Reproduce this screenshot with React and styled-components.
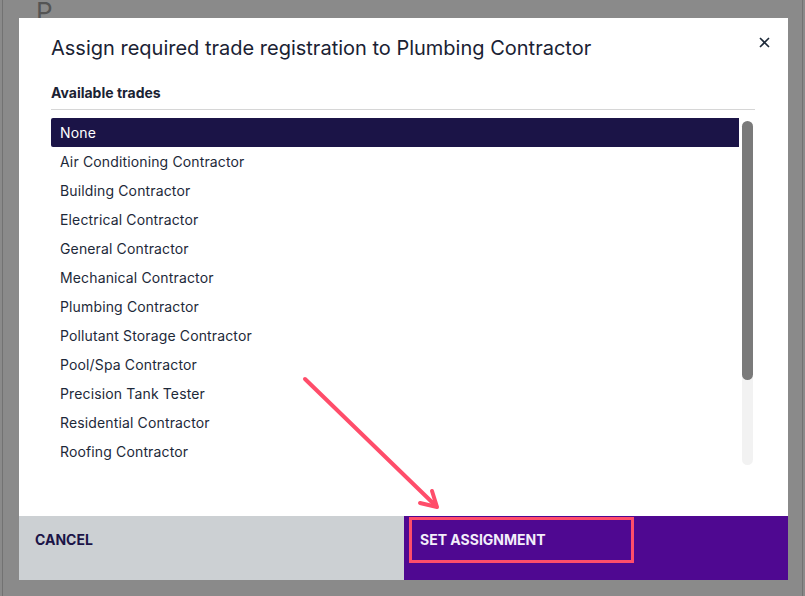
import React from "react"
import styled, { createGlobalStyle } from "styled-components"

const GlobalStyle = createGlobalStyle`
  html, body {
    margin: 0;
    padding: 0;
    background: #8a8a8a;
    font-family: Inter, "Liberation Sans", sans-serif;
    -webkit-font-smoothing: antialiased;
  }
`

const trades = [
  "None",
  "Air Conditioning Contractor",
  "Building Contractor",
  "Electrical Contractor",
  "General Contractor",
  "Mechanical Contractor",
  "Plumbing Contractor",
  "Pollutant Storage Contractor",
  "Pool/Spa Contractor",
  "Precision Tank Tester",
  "Residential Contractor",
  "Roofing Contractor",
]

export default function App() {
  const selected = "None"
  return (
    <>
      <GlobalStyle />
      <Page>
        <PageHeading>P</PageHeading>
        <Backdrop>
          <Modal>
            <Header>
              <Title>Assign required trade registration to Plumbing Contractor</Title>
              <CloseButton aria-label="Close">
                <svg width="11" height="11" viewBox="0 0 11 11">
                  <path d="M1 1 L10 10 M10 1 L1 10" stroke="#1d2939" strokeWidth="1.6" />
                </svg>
              </CloseButton>
            </Header>
            <Body>
              <SectionLabel>Available trades</SectionLabel>
              <ListArea>
                <List>
                  {trades.map((t) => (
                    <Row key={t} active={t === selected}>
                      {t}
                    </Row>
                  ))}
                </List>
                <ScrollTrack>
                  <ScrollThumb />
                </ScrollTrack>
              </ListArea>
            </Body>
            <Footer>
              <FooterButton>CANCEL</FooterButton>
              <FooterButton primary>SET ASSIGNMENT</FooterButton>
            </Footer>
          </Modal>
        </Backdrop>
        <Callout />
        <Arrow width="805" height="596" viewBox="0 0 805 596">
          <g stroke="#ff4d6a" strokeWidth="4" strokeLinecap="round" fill="none">
            <path d="M305 379 L436 506" />
            <path d="M420 503 L437 507 L432 491" strokeLinejoin="round" />
          </g>
        </Arrow>
      </Page>
    </>
  )
}

const Page = styled.div`
  position: relative;
  height: 596px;
  margin: 0 2px;
  border-left: 1px solid #727272;
  border-right: 1px solid #727272;
  background: #8a8a8a;
  overflow: hidden;
`

const PageHeading = styled.h1`
  margin: -4px 0 0 33px;
  font-size: 26px;
  font-weight: 400;
  color: #545454;
`

const Backdrop = styled.div`
  position: absolute;
  inset: 0;
  padding: 18px 14px 16px 16px;
  display: flex;
`

const Modal = styled.div`
  flex: 1;
  background: #ffffff;
  display: flex;
  flex-direction: column;
`

const Header = styled.div`
  display: flex;
  align-items: flex-start;
  justify-content: space-between;
  padding: 16px 14px 0 32px;
`

const Title = styled.h2`
  margin: 0;
  font-size: 20px;
  line-height: 28px;
  font-weight: 400;
  color: #1a2233;
`

const CloseButton = styled.button`
  border: 0;
  background: none;
  padding: 4px;
  margin-top: -1px;
  cursor: pointer;
  display: flex;
`

const Body = styled.div`
  flex: 1;
  padding: 21px 33px 0 32px;
`

const SectionLabel = styled.div`
  font-size: 14px;
  font-weight: 700;
  line-height: 20px;
  color: #1a2233;
  padding-bottom: 6px;
  border-bottom: 1px solid #d6d6d6;
`

const ListArea = styled.div`
  display: flex;
  margin-top: 8px;
  height: 349px;
`

const List = styled.ul`
  list-style: none;
  margin: 0;
  padding: 0;
  flex: 1;
`

const Row = styled.li`
  height: 29px;
  line-height: 29px;
  padding-left: 9px;
  font-size: 14px;
  letter-spacing: 0.01em;
  color: ${(p) => (p.active ? "#ffffff" : "#1d2939")};
  background: ${(p) => (p.active ? "#1b1447" : "transparent")};
  border-radius: ${(p) => (p.active ? "2px 0 0 2px" : "0")};
`

const ScrollTrack = styled.div`
  width: 11px;
  margin: 3px 2px 0 3px;
  height: 344px;
  border-radius: 6px;
  background: #f2f2f2;
`

const ScrollThumb = styled.div`
  height: 259px;
  border-radius: 6px;
  background: #7a7a7a;
`

const Footer = styled.div`
  display: grid;
  grid-template-columns: 385px 1fr;
  height: 64px;
`

const FooterButton = styled.div`
  padding: 14px 16px 0;
  font-size: 14px;
  line-height: 20px;
  font-weight: 700;
  color: ${(p) => (p.primary ? "#f3eefa" : "#1b1447")};
  background: ${(p) => (p.primary ? "#4f0891" : "#ccd0d3")};
`

const Callout = styled.div`
  position: absolute;
  left: 406px;
  top: 517px;
  width: 219px;
  height: 40px;
  border: 3px solid #ff4d6a;
`

const Arrow = styled.svg`
  position: absolute;
  left: -3px;
  top: 0;
  pointer-events: none;
`
